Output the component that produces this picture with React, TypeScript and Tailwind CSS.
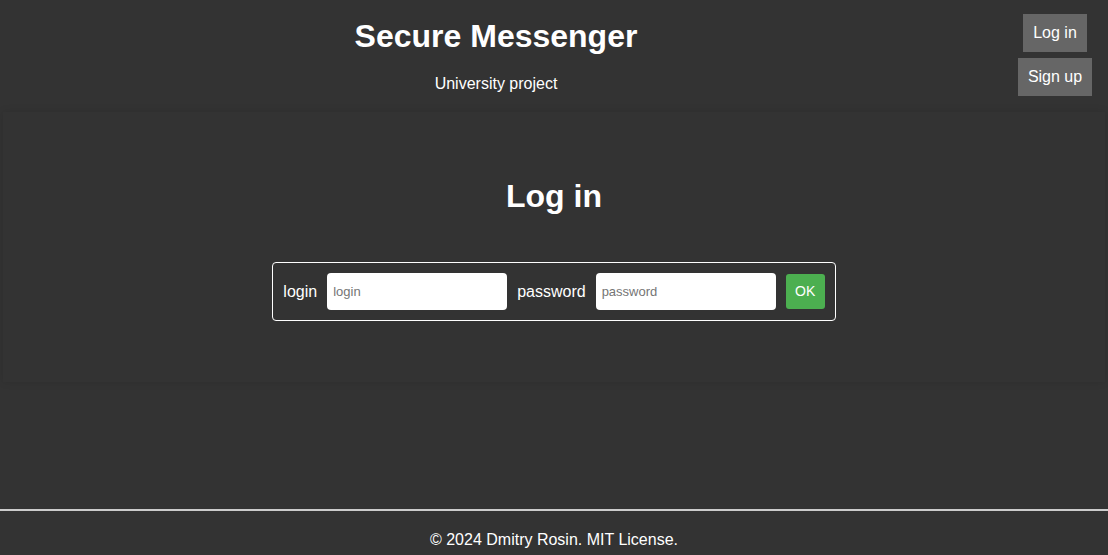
import React from "react";

export default function App() {
  return (
    <div
      className="min-h-screen flex flex-col bg-[#333333] text-white"
      style={{ fontFamily: '"Liberation Sans", Arial, sans-serif' }}
    >
      <header className="flex h-[112px]">
        <div className="flex-1 flex flex-col items-center">
          <h1 className="mt-[18px] text-[32px] leading-[37px] font-bold">Secure Messenger</h1>
          <p className="mt-[20px] text-[16px] leading-[18px]">University project</p>
        </div>
        <nav className="w-[116px] pl-[26px] pr-[16px] pt-[14px] flex flex-col items-center gap-[6px]">
          <button className="bg-[#666666] text-white text-[16px] leading-[18px] px-[10px] py-[10px] h-[38px] whitespace-nowrap">Log in</button>
          <button className="bg-[#666666] text-white text-[16px] leading-[18px] px-[10px] py-[10px] h-[38px] whitespace-nowrap">Sign up</button>
        </nav>
      </header>
      <main className="mx-[3px] h-[270px] shadow-[0_0_8px_rgba(0,0,0,0.12)] flex flex-col items-center">
        <h2 className="mt-[66px] text-[32px] leading-[37px] font-bold">Log in</h2>
        <form
          className="mt-[47px] flex items-center gap-[10px] border border-white rounded-[4px] p-[10px]"
          onSubmit={(e) => e.preventDefault()}
        >
          <label className="text-[16px] leading-[18px]">login</label>
          <input
            placeholder="login"
            className="w-[180px] h-[37px] bg-white rounded-[4px] px-[6px] text-[13px] text-black placeholder:text-[#757575] outline-none"
          />
          <label className="text-[16px] leading-[18px]">password</label>
          <input
            type="password"
            placeholder="password"
            className="w-[180px] h-[37px] bg-white rounded-[4px] px-[6px] text-[13px] text-black placeholder:text-[#757575] outline-none"
          />
          <button className="w-[39px] h-[35px] bg-[#4caf50] rounded-[3px] text-[14px] text-white">OK</button>
        </form>
      </main>
      <div className="flex-1" />
      <footer className="h-[46px] border-t-2 border-[#cccccc] flex justify-center pt-[20px]">
        <p className="text-[16px] leading-[18px]">© 2024 Dmitry Rosin. MIT License.</p>
      </footer>
    </div>
  );
}
